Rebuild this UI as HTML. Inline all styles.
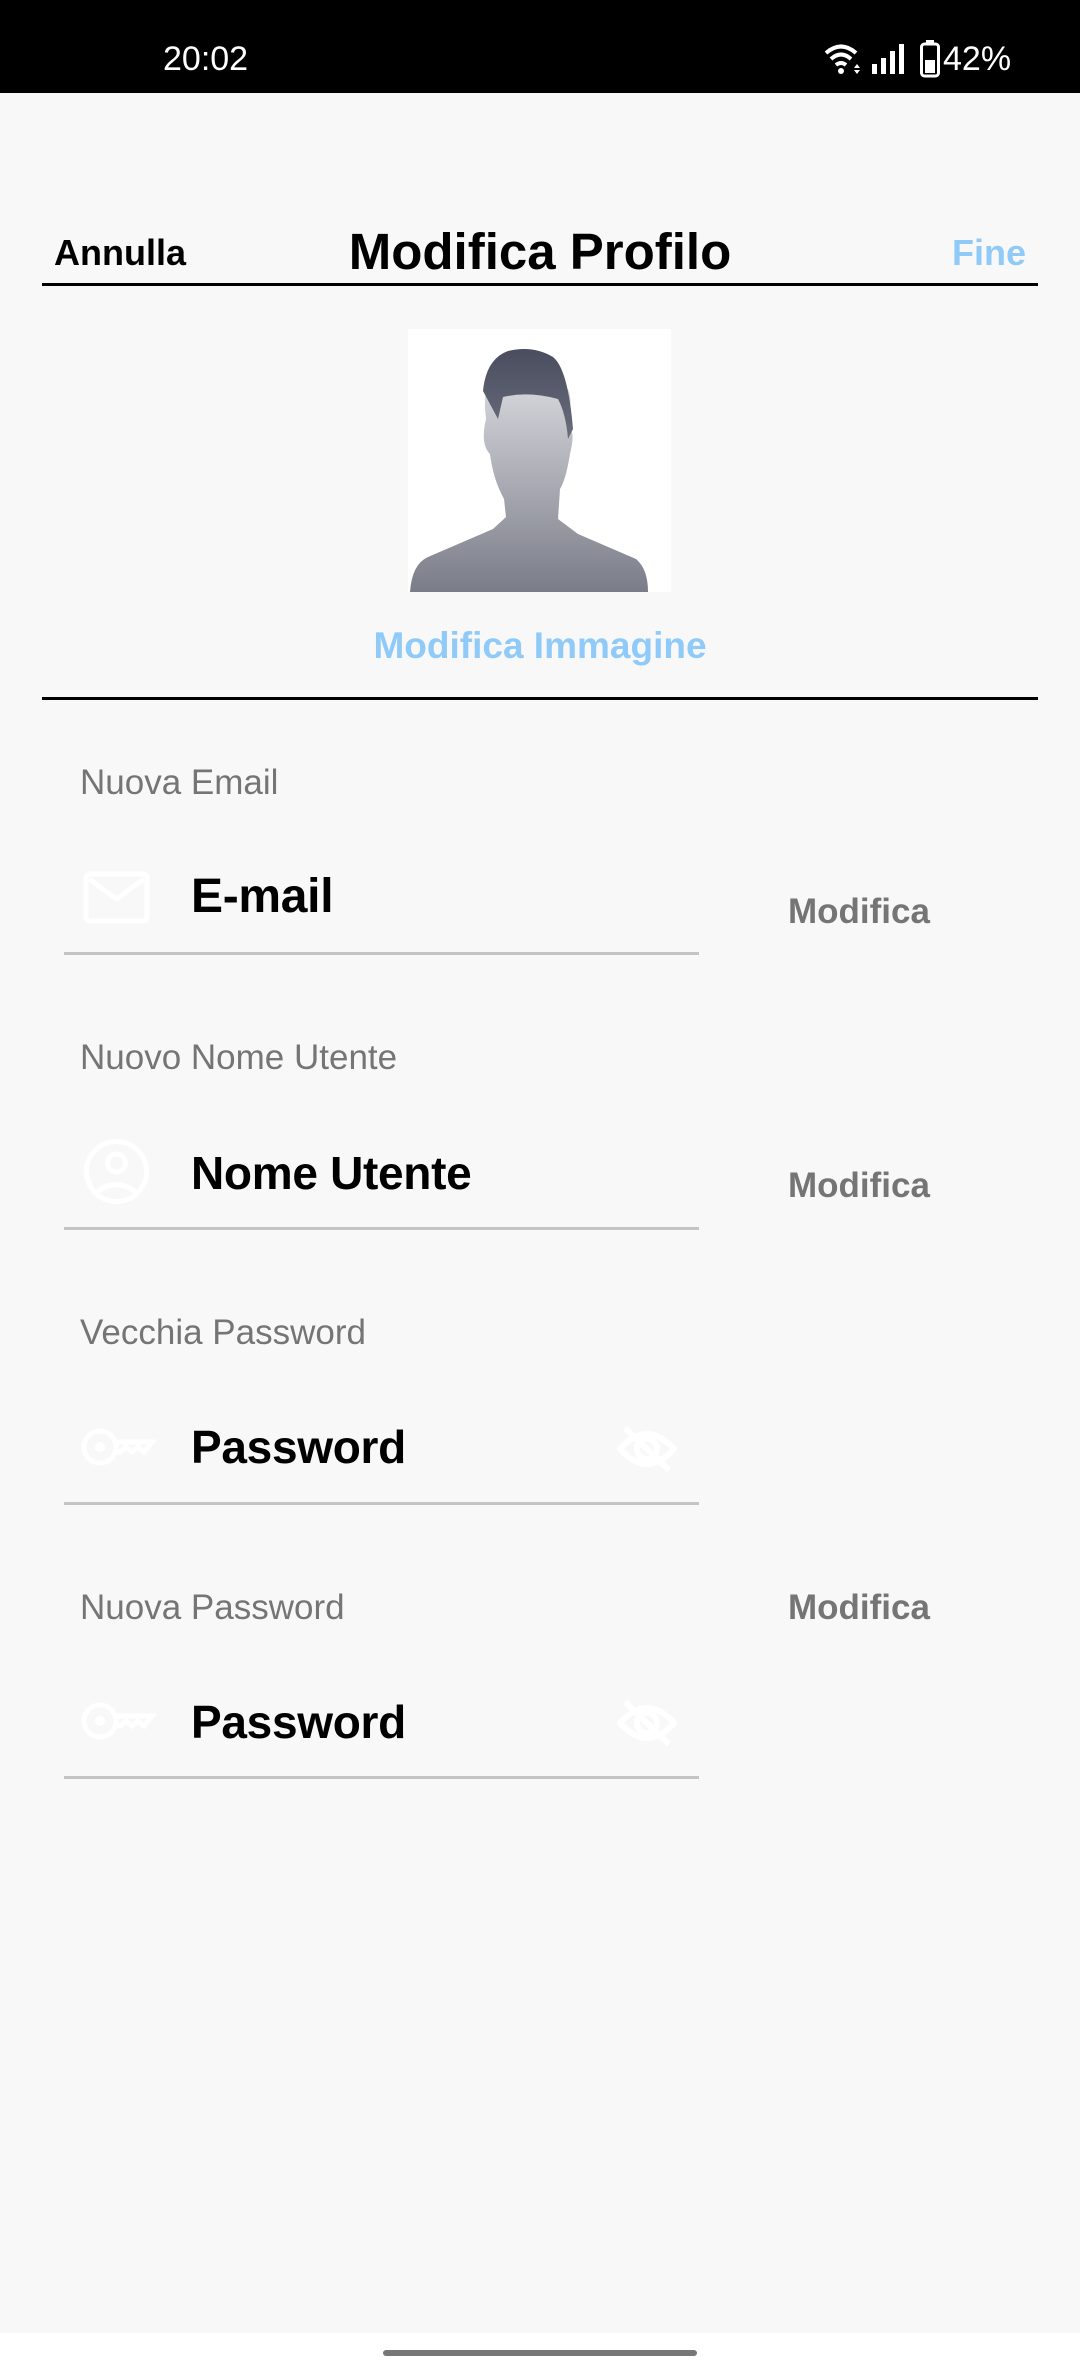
<!DOCTYPE html>
<html><head><meta charset="utf-8"><style>
*{margin:0;padding:0;box-sizing:border-box}
body{width:1080px;height:2376px;background:#f8f8f8;font-family:"Liberation Sans",sans-serif;position:relative;overflow:hidden}
.a{position:absolute;white-space:nowrap}
.sb{position:absolute;left:0;top:0;width:1080px;height:93px;background:#000;color:#fff}
.lbl{font-size:35px;color:#757575}
.inp{font-size:46px;font-weight:bold;color:#000;letter-spacing:-0.3px}
.ul{position:absolute;left:64px;width:635px;height:3px;background:#c4c4c4}
.mod{font-size:35px;font-weight:bold;color:#757575}
</style></head><body>
<div class="sb">
<div class="a" style="left:163px;top:40px;font-size:34px;">20:02</div>
<svg class="a" style="left:823px;top:42px" width="40" height="34" viewBox="0 0 40 34"><path d="M3 11 Q18 -2 33 11" stroke="#fff" stroke-width="4" fill="none"/><path d="M8 17 Q18 8 28 17" stroke="#fff" stroke-width="4" fill="none"/><path d="M13 23 Q18 19 23 23" stroke="#fff" stroke-width="4" fill="none"/><circle cx="18" cy="29" r="3" fill="#fff"/><path d="M34 22 l3 4 h-6z M34 32 l3 -4 h-6z" fill="#fff"/></svg>
<svg class="a" style="left:872px;top:44px" width="40" height="30"><rect x="0" y="20" width="5" height="10" fill="#fff"/><rect x="9" y="14" width="5" height="16" fill="#fff"/><rect x="18" y="7" width="5" height="23" fill="#fff"/><rect x="27" y="0" width="5" height="30" fill="#fff"/></svg>
<svg class="a" style="left:920px;top:40px" width="20" height="38"><rect x="6" y="0" width="8" height="3" fill="#fff"/><rect x="1.5" y="4" width="17" height="32" rx="3" fill="none" stroke="#fff" stroke-width="3"/><rect x="5" y="20" width="10" height="13" fill="#fff"/></svg>
<div class="a" style="left:943px;top:40px;font-size:34px;">42%</div>
</div>

<div class="a" style="left:54px;top:232px;font-size:36px;font-weight:bold;color:#000">Annulla</div>
<div class="a" style="left:0;width:1080px;text-align:center;top:222px;font-size:51px;font-weight:bold;color:#000">Modifica Profilo</div>
<div class="a" style="right:54px;top:232px;font-size:36px;font-weight:bold;color:#90caf9">Fine</div>
<div class="a" style="left:42px;top:283px;width:996px;height:3px;background:#000"></div>

<svg class="a" style="left:408px;top:329px" width="263" height="263" viewBox="0 0 263 263">
<defs><linearGradient id="g" x1="0" y1="0" x2="0" y2="1"><stop offset="0" stop-color="#d8d9de"/><stop offset="1" stop-color="#7a7c88"/></linearGradient>
<linearGradient id="h" x1="0" y1="0" x2="0" y2="1"><stop offset="0" stop-color="#4a4d5e"/><stop offset="1" stop-color="#6a6d7c"/></linearGradient></defs>
<rect width="263" height="263" fill="#fff"/>
<path d="M78 90 Q74 60 85 48 L160 60 Q165 70 160 100 Q168 100 162 125 Q158 150 152 160 L150 190 L170 205 L228 230 Q240 240 240 263 L2 263 Q4 235 20 228 L85 200 L98 188 L96 170 Q85 150 82 125 Q72 115 78 90Z" fill="url(#g)"/>
<path d="M75 62 Q78 30 100 22 Q125 16 145 28 Q160 40 165 100 L160 110 Q158 85 150 70 Q120 62 95 68 L90 90 Z" fill="url(#h)"/>
</svg>
<div class="a" style="left:0;width:1080px;text-align:center;top:625px;font-size:37px;font-weight:bold;color:#90caf9">Modifica Immagine</div>
<div class="a" style="left:42px;top:697px;width:996px;height:3px;background:#000"></div>

<div class="a lbl" style="left:80px;top:763px">Nuova Email</div>
<svg class="a" style="left:83px;top:871px" width="67" height="53"><rect x="3" y="3" width="61" height="47" rx="4" fill="none" stroke="#fff" stroke-width="5"/><path d="M6 8 L33.5 28 L61 8" fill="none" stroke="#fff" stroke-width="5"/></svg>
<div class="a inp" style="left:191px;top:869px;font-size:48px">E-mail</div>
<div class="ul" style="top:952px"></div>
<div class="a mod" style="left:788px;top:892px">Modifica</div>

<div class="a lbl" style="left:80px;top:1038px">Nuovo Nome Utente</div>
<svg class="a" style="left:83px;top:1138px" width="67" height="67"><circle cx="33.5" cy="33.5" r="30" fill="none" stroke="#fff" stroke-width="5"/><circle cx="33.5" cy="25" r="9" fill="none" stroke="#fff" stroke-width="5"/><path d="M13 55 Q33 38 54 55" fill="none" stroke="#fff" stroke-width="5"/></svg>
<div class="a inp" style="left:191px;top:1146px">Nome Utente</div>
<div class="ul" style="top:1227px"></div>
<div class="a mod" style="left:788px;top:1166px">Modifica</div>

<div class="a lbl" style="left:80px;top:1313px">Vecchia Password</div>
<svg class="a" style="left:80px;top:1425px" width="76" height="44"><circle cx="20" cy="22" r="16" fill="none" stroke="#fff" stroke-width="5"/><circle cx="20" cy="22" r="5" fill="#fff"/><path d="M36 17 H72 L64 27 L58 22 L52 27 L46 22 L40 27 H36" fill="none" stroke="#fff" stroke-width="5"/></svg>
<div class="a inp" style="left:191px;top:1420px">Password</div>
<svg class="a" style="left:617px;top:1424px" width="60" height="50"><path d="M3 25 Q30 -5 57 25 Q30 55 3 25Z" fill="none" stroke="#fff" stroke-width="6"/><circle cx="30" cy="25" r="10" fill="none" stroke="#fff" stroke-width="6"/><path d="M8 4 L52 46" stroke="#fff" stroke-width="6"/></svg>
<div class="ul" style="top:1502px"></div>

<div class="a lbl" style="left:80px;top:1588px">Nuova Password</div>
<div class="a mod" style="left:788px;top:1588px">Modifica</div>
<svg class="a" style="left:80px;top:1699px" width="76" height="44"><circle cx="20" cy="22" r="16" fill="none" stroke="#fff" stroke-width="5"/><circle cx="20" cy="22" r="5" fill="#fff"/><path d="M36 17 H72 L64 27 L58 22 L52 27 L46 22 L40 27 H36" fill="none" stroke="#fff" stroke-width="5"/></svg>
<div class="a inp" style="left:191px;top:1695px">Password</div>
<svg class="a" style="left:617px;top:1698px" width="60" height="50"><path d="M3 25 Q30 -5 57 25 Q30 55 3 25Z" fill="none" stroke="#fff" stroke-width="6"/><circle cx="30" cy="25" r="10" fill="none" stroke="#fff" stroke-width="6"/><path d="M8 4 L52 46" stroke="#fff" stroke-width="6"/></svg>
<div class="ul" style="top:1776px"></div>

<div class="a" style="left:0;top:2333px;width:1080px;height:43px;background:#fff"></div>
<div class="a" style="left:383px;top:2350px;width:314px;height:6px;border-radius:3px;background:#777"></div>
</body></html>
